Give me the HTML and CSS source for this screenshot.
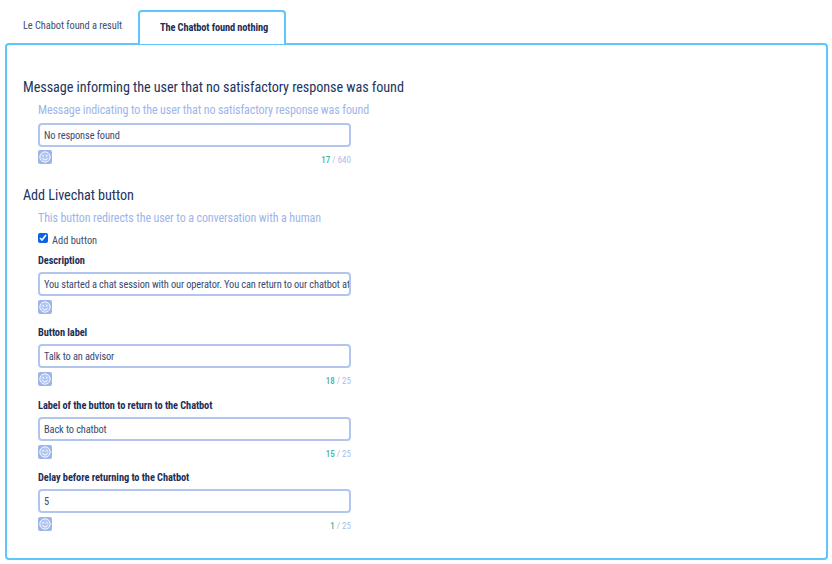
FILE: index.html
```html
<!DOCTYPE html>
<html lang="en">
<head>
<meta charset="utf-8">
<title>Chatbot settings</title>
<link rel="stylesheet" href="styles.css">
</head>
<body>
<svg class="sprite" width="0" height="0" aria-hidden="true">
  <symbol id="smile" viewBox="0 0 14 14">
    <rect width="14" height="14" rx="2" fill="#9db5ea"/>
    <circle cx="7" cy="7" r="5.200" fill="#b4c7f1" stroke="#f2f6ff" stroke-width="1"/>
    <circle cx="5.100" cy="5.700" r=".8" fill="#fff"/>
    <circle cx="8.900" cy="5.700" r=".8" fill="#fff"/>
    <path d="M4.400 8.100c.5 1.100 1.400 1.700 2.600 1.700s2.100-.6 2.600-1.700" fill="none" stroke="#fff" stroke-width="1"/>
  </symbol>
</svg>
<div class="tabs">
  <div class="tab">Le Chabot found a result</div>
  <div class="tab active">The Chatbot found nothing</div>
</div>
<main class="panel">
  <section class="group first">
    <h2>Message informing the user that no satisfactory response was found</h2>
    <div class="body">
      <p class="hint">Message indicating to the user that no satisfactory response was found</p>
      <div class="field">
        <div class="input">No response found</div>
        <div class="meta"><svg class="emoji"><use href="#smile"/></svg><span class="count"><b>17</b> / 640</span></div>
      </div>
    </div>
  </section>
  <section class="group second">
    <h2>Add Livechat button</h2>
    <div class="body">
      <p class="hint">This button redirects the user to a conversation with a human</p>
      <label class="check"><input type="checkbox" checked> <span>Add button</span></label>
      <div class="field">
        <div class="label">Description</div>
        <div class="input">You started a chat session with our operator. You can return to our chatbot at any time</div>
        <div class="meta"><svg class="emoji"><use href="#smile"/></svg></div>
      </div>
      <div class="field">
        <div class="label">Button label</div>
        <div class="input">Talk to an advisor</div>
        <div class="meta"><svg class="emoji"><use href="#smile"/></svg><span class="count"><b>18</b> / 25</span></div>
      </div>
      <div class="field">
        <div class="label">Label of the button to return to the Chatbot</div>
        <div class="input">Back to chatbot</div>
        <div class="meta"><svg class="emoji"><use href="#smile"/></svg><span class="count"><b>15</b> / 25</span></div>
      </div>
      <div class="field">
        <div class="label">Delay before returning to the Chatbot</div>
        <div class="input">5</div>
        <div class="meta"><svg class="emoji"><use href="#smile"/></svg><span class="count"><b>1</b> / 25</span></div>
      </div>
    </div>
  </section>
</main>
</body>
</html>
```
FILE: styles.css
```css
* { box-sizing: border-box; }
html, body { margin: 0; height: 100%; background: #fff; }
body {
  padding: 10px 4px 4px 5px;
  font-family: Roboto, "Liberation Sans", sans-serif;
  font-stretch: 85%;
  color: #1d2f57;
  overflow: hidden;
}
.sprite { position: absolute; }
.tabs { display: flex; height: 34px; padding-left: 1px; position: relative; z-index: 1; }
.tab {
  width: 132px;
  padding: 10px 0 0 1px;
  font-size: 10.4px;
  letter-spacing: -.06px;
  line-height: 12px;
  text-align: center;
  color: #3d4d70;
}
.tab.active {
  width: 148px;
  padding: 10px 0 0 4px;
  letter-spacing: -.12px;
  font-weight: 700;
  color: #1d2f57;
  background: #fff;
  border: 2px solid #5cc6fd;
  border-bottom: 0;
  border-radius: 4px 4px 0 0;
}
.panel {
  height: 517px;
  margin-top: -1px;
  padding: 33px 16px 0;
  border: 2px solid #5cc6fd;
  border-radius: 4px;
}
h2 {
  margin: 0;
  font-size: 14.2px;
  letter-spacing: -.06px;
  line-height: 18px;
  font-weight: 400;
  color: #22345e;
}
.group.second { margin-top: 20px; }
.body { width: 313px; margin-left: 15px; }
.hint {
  margin: 7px 0 0;
  font-size: 12px;
  letter-spacing: -.11px;
  line-height: 14px;
  color: #9db5ea;
  white-space: nowrap;
}
.first .hint { margin-bottom: 6px; }
.check {
  display: flex;
  align-items: center;
  gap: 4px;
  height: 14px;
  margin-top: 7px;
  font-size: 10.4px;
  color: #3d4d70;
}
.check input { width: 10px; height: 10px; margin: 0 0 2px; accent-color: #0b63e5; }
.check span { padding-top: 3px; }
.label {
  margin-bottom: 5px;
  font-size: 10.4px;
  letter-spacing: -.08px;
  line-height: 13px;
  font-weight: 700;
  color: #1d2f57;
}
.second .field { margin-top: 7.5px; }
.second .field + .field { margin-top: 11.67px; }
.input {
  height: 24px;
  padding: 0 4px;
  border: 2px solid #b2c5ee;
  border-radius: 4px;
  font-size: 10.4px;
  letter-spacing: -.12px;
  line-height: 21px;
  color: #3a4a70;
  white-space: nowrap;
  overflow: hidden;
}
.meta { display: flex; justify-content: space-between; align-items: flex-end; height: 19px; padding-top: 4px; }
.first .meta { padding-top: 3px; }
.emoji { display: block; width: 14px; height: 14px; align-self: flex-start; }
.count { font-size: 9px; line-height: 11px; color: #a9bdea; }
.count b { font-weight: 500; color: #4cb69a; }
```
